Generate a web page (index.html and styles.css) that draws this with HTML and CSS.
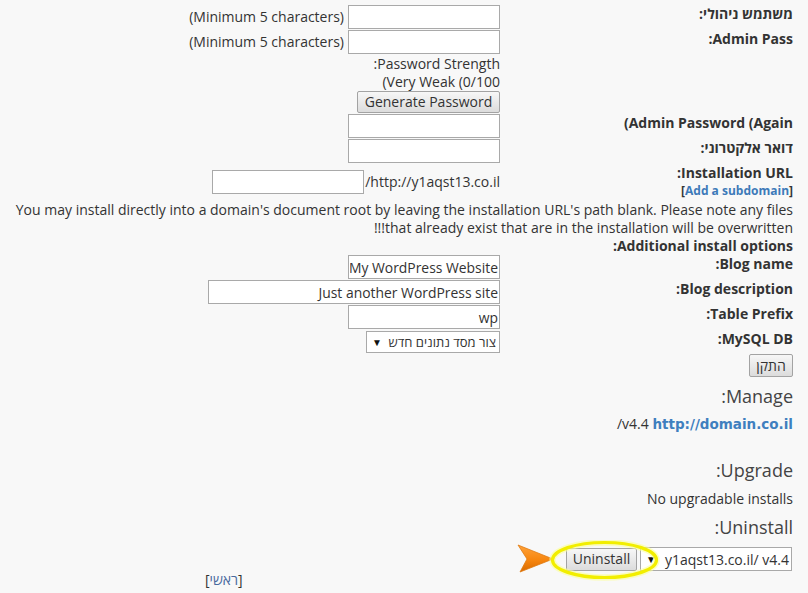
FILE: index.html
```html
<!DOCTYPE html>
<html lang="he" dir="rtl">
<head>
<meta charset="utf-8">
<title>Install</title>
<link rel="stylesheet" href="styles.css">
</head>
<body>
<div class="page" dir="rtl">
  <div class="row">
    <div class="lbl">משתמש ניהולי:</div>
    <div class="fld"><input class="in" type="text"><span class="hint" dir="ltr">(Minimum 5 characters)</span></div>
  </div>
  <div class="row">
    <div class="lbl">Admin Pass:</div>
    <div class="fld"><input class="in" type="password"><span class="hint" dir="ltr">(Minimum 5 characters)</span></div>
  </div>
  <div class="row">
    <div class="lbl"></div>
    <div class="fld stack">
      <div class="txt">Password Strength:</div>
      <div class="txt"><bdi dir="ltr">(Very Weak (0/100</bdi></div>
      <button class="btn gen" type="button">Generate Password</button>
    </div>
  </div>
  <div class="row">
    <div class="lbl"><bdi dir="ltr">(Admin Password (Again</bdi></div>
    <div class="fld"><input class="in" type="password"></div>
  </div>
  <div class="row">
    <div class="lbl">דואר אלקטרוני:</div>
    <div class="fld"><input class="in" type="text"></div>
  </div>
  <div class="row">
    <div class="lbl">Installation URL:<div class="sub">[<a href="#" class="sublink">Add a subdomain</a>]</div></div>
    <div class="fld mid"><span class="txt">http://y1aqst13.co.il/</span><input class="in" type="text"></div>
  </div>
  <p class="note">You may install directly into a domain's document root by leaving the installation URL's path blank. Please note any files<br>that already exist that are in the installation will be overwritten!!!</p>
  <div class="head">Additional install options:</div>
  <div class="row">
    <div class="lbl">Blog name:</div>
    <div class="fld"><input class="in" type="text" value="My WordPress Website"></div>
  </div>
  <div class="row">
    <div class="lbl">Blog description:</div>
    <div class="fld"><input class="in wide" type="text" value="Just another WordPress site"></div>
  </div>
  <div class="row">
    <div class="lbl">Table Prefix:</div>
    <div class="fld"><input class="in" type="text" value="wp"></div>
  </div>
  <div class="row">
    <div class="lbl">MySQL DB:</div>
    <div class="fld pad1">
      <div class="sel db"><span class="seltext">צור מסד נתונים חדש</span><span class="arrow">▼</span></div>
    </div>
  </div>
  <div class="row">
    <button class="btn inst" type="button">התקן</button>
  </div>

  <div class="title manage">Manage:</div>
  <div class="links"><bdi><a href="#" class="dom">http://domain.co.il</a></bdi> <bdi dir="ltr" class="ver">/v4.4</bdi></div>
  <div class="title upgrade">Upgrade:</div>
  <div class="plain">No upgradable installs</div>
  <div class="title uninst">Uninstall:</div>
  <div class="unrow">
    <div class="sel un"><span class="seltext">y1aqst13.co.il/ v4.4</span><span class="arrow">▼</span></div>
    <button class="btn unbtn" type="button">Uninstall</button>
  </div>
  <div class="foot">[<a href="#" class="home">ראשי</a>]</div>

  <svg class="annot" width="160" height="46" viewBox="0 0 160 46" aria-hidden="true">
    <defs>
      <linearGradient id="og" x1="0" y1="0" x2="0" y2="1">
        <stop offset="0" stop-color="#ffa23a"/>
        <stop offset="0.55" stop-color="#f7860f"/>
        <stop offset="1" stop-color="#d86a00"/>
      </linearGradient>
    </defs>
    <path d="M3 5 L38 19 L5 32 L12 19 Z" fill="url(#og)" stroke="#e07a10" stroke-width="0.8" stroke-linejoin="round"/>
    <ellipse cx="89.5" cy="20" rx="52" ry="17.5" fill="none" stroke="#fbff9a" stroke-width="6.5" opacity="0.6"/>
    <ellipse cx="89.5" cy="20" rx="52" ry="17.5" fill="none" stroke="#f2ee00" stroke-width="3.2"/>
  </svg>
</div>
</body>
</html>
```
FILE: styles.css
```css
html, body {
  margin: 0;
  padding: 0;
}
body {
  background: #f8f8f8;
  font-family: "Open Sans", "Liberation Sans", "DejaVu Sans", sans-serif;
  font-size: 14px;
  color: #333;
}
.page {
  position: relative;
  direction: rtl;
  padding: 5px 15px 0 15px;
  height: 588px;
  box-sizing: border-box;
}
.row {
  display: flex;
  padding-bottom: 1px;
}
.lbl {
  width: 293px;
  flex: none;
  font-weight: bold;
  font-size: 14px;
  line-height: 18px;
  padding-top: 0;
  color: #333;
}
.sub {
  font-size: 12px;
  line-height: 18px;
  color: #333;
}
.sublink {
  color: #3d7ab9;
  text-decoration: none;
}
.fld {
  display: flex;
  align-items: flex-start;
  gap: 4px;
}
.fld.mid {
  align-items: center;
  gap: 1px;
}
.fld.pad1 {
  padding-top: 1px;
}
.fld.stack {
  flex-direction: column;
  align-items: flex-start;
  gap: 0;
}
.txt {
  line-height: 18px;
}
.hint {
  line-height: 24px;
}
.in {
  width: 152px;
  height: 24px;
  box-sizing: border-box;
  margin: 0;
  border: 1px solid #a9a9a9;
  background: #fff;
  padding: 0 1px;
  font-family: inherit;
  font-size: 13.9px;
  color: #333;
  text-align: right;
  direction: rtl;
  outline: none;
}
.in.wide {
  width: 292px;
}
.btn {
  margin: 0;
  font-family: inherit;
  font-size: 14px;
  color: #333;
  border: 1px solid #a3a3a3;
  border-radius: 2px;
  background: linear-gradient(#f7f7f7, #dcdcdc);
  padding: 0;
  box-sizing: border-box;
  line-height: 20px;
}
.btn.gen {
  width: 143px;
  height: 22px;
}
.btn.inst {
  width: 44px;
  height: 23px;
}
.btn.unbtn {
  width: 71px;
  height: 23px;
}
.note {
  margin: 0;
  line-height: 18px;
  text-align: right;
}
.head {
  font-weight: bold;
  line-height: 18px;
}
.sel {
  position: relative;
  display: flex;
  align-items: center;
  box-sizing: border-box;
  border: 1px solid #a9a9a9;
  background: #fff;
  padding: 0 3px 0 18px;
}
.sel .seltext {
  white-space: nowrap;
}
.sel .arrow {
  position: absolute;
  left: 5px;
  top: 50%;
  transform: translateY(-50%);
  font-size: 10px;
  line-height: 10px;
  color: #111;
}
.sel.db {
  width: 134px;
  height: 22px;
  font-size: 13px;
}
.sel.un {
  width: 152px;
  height: 24px;
  font-size: 14px;
  padding-right: 2px;
}
.title {
  font-size: 18px;
  line-height: 24px;
  color: #444;
}
.title.manage {
  margin-top: 6px;
}
.title.upgrade {
  margin-top: 24px;
}
.title.uninst {
  margin-top: 6px;
}
.links {
  margin-top: 6px;
  line-height: 20px;
}
.dom {
  font-family: "DejaVu Sans", Verdana, sans-serif;
  font-weight: bold;
  font-size: 13.5px;
  color: #3f7fbf;
  text-decoration: none;
}
.ver {
  font-size: 14px;
  color: #333;
}
.plain {
  margin-top: 7px;
  line-height: 20px;
}
.unrow {
  display: flex;
  align-items: center;
  gap: 3px;
  margin-top: 8px;
  padding-right: 1px;
}
.foot {
  text-align: left;
  padding-left: 190px;
  line-height: 18px;
  margin-top: 0;
}
.home {
  color: #4a6a9e;
  text-decoration: none;
}
.annot {
  position: absolute;
  left: 515px;
  top: 540px;
}
```
